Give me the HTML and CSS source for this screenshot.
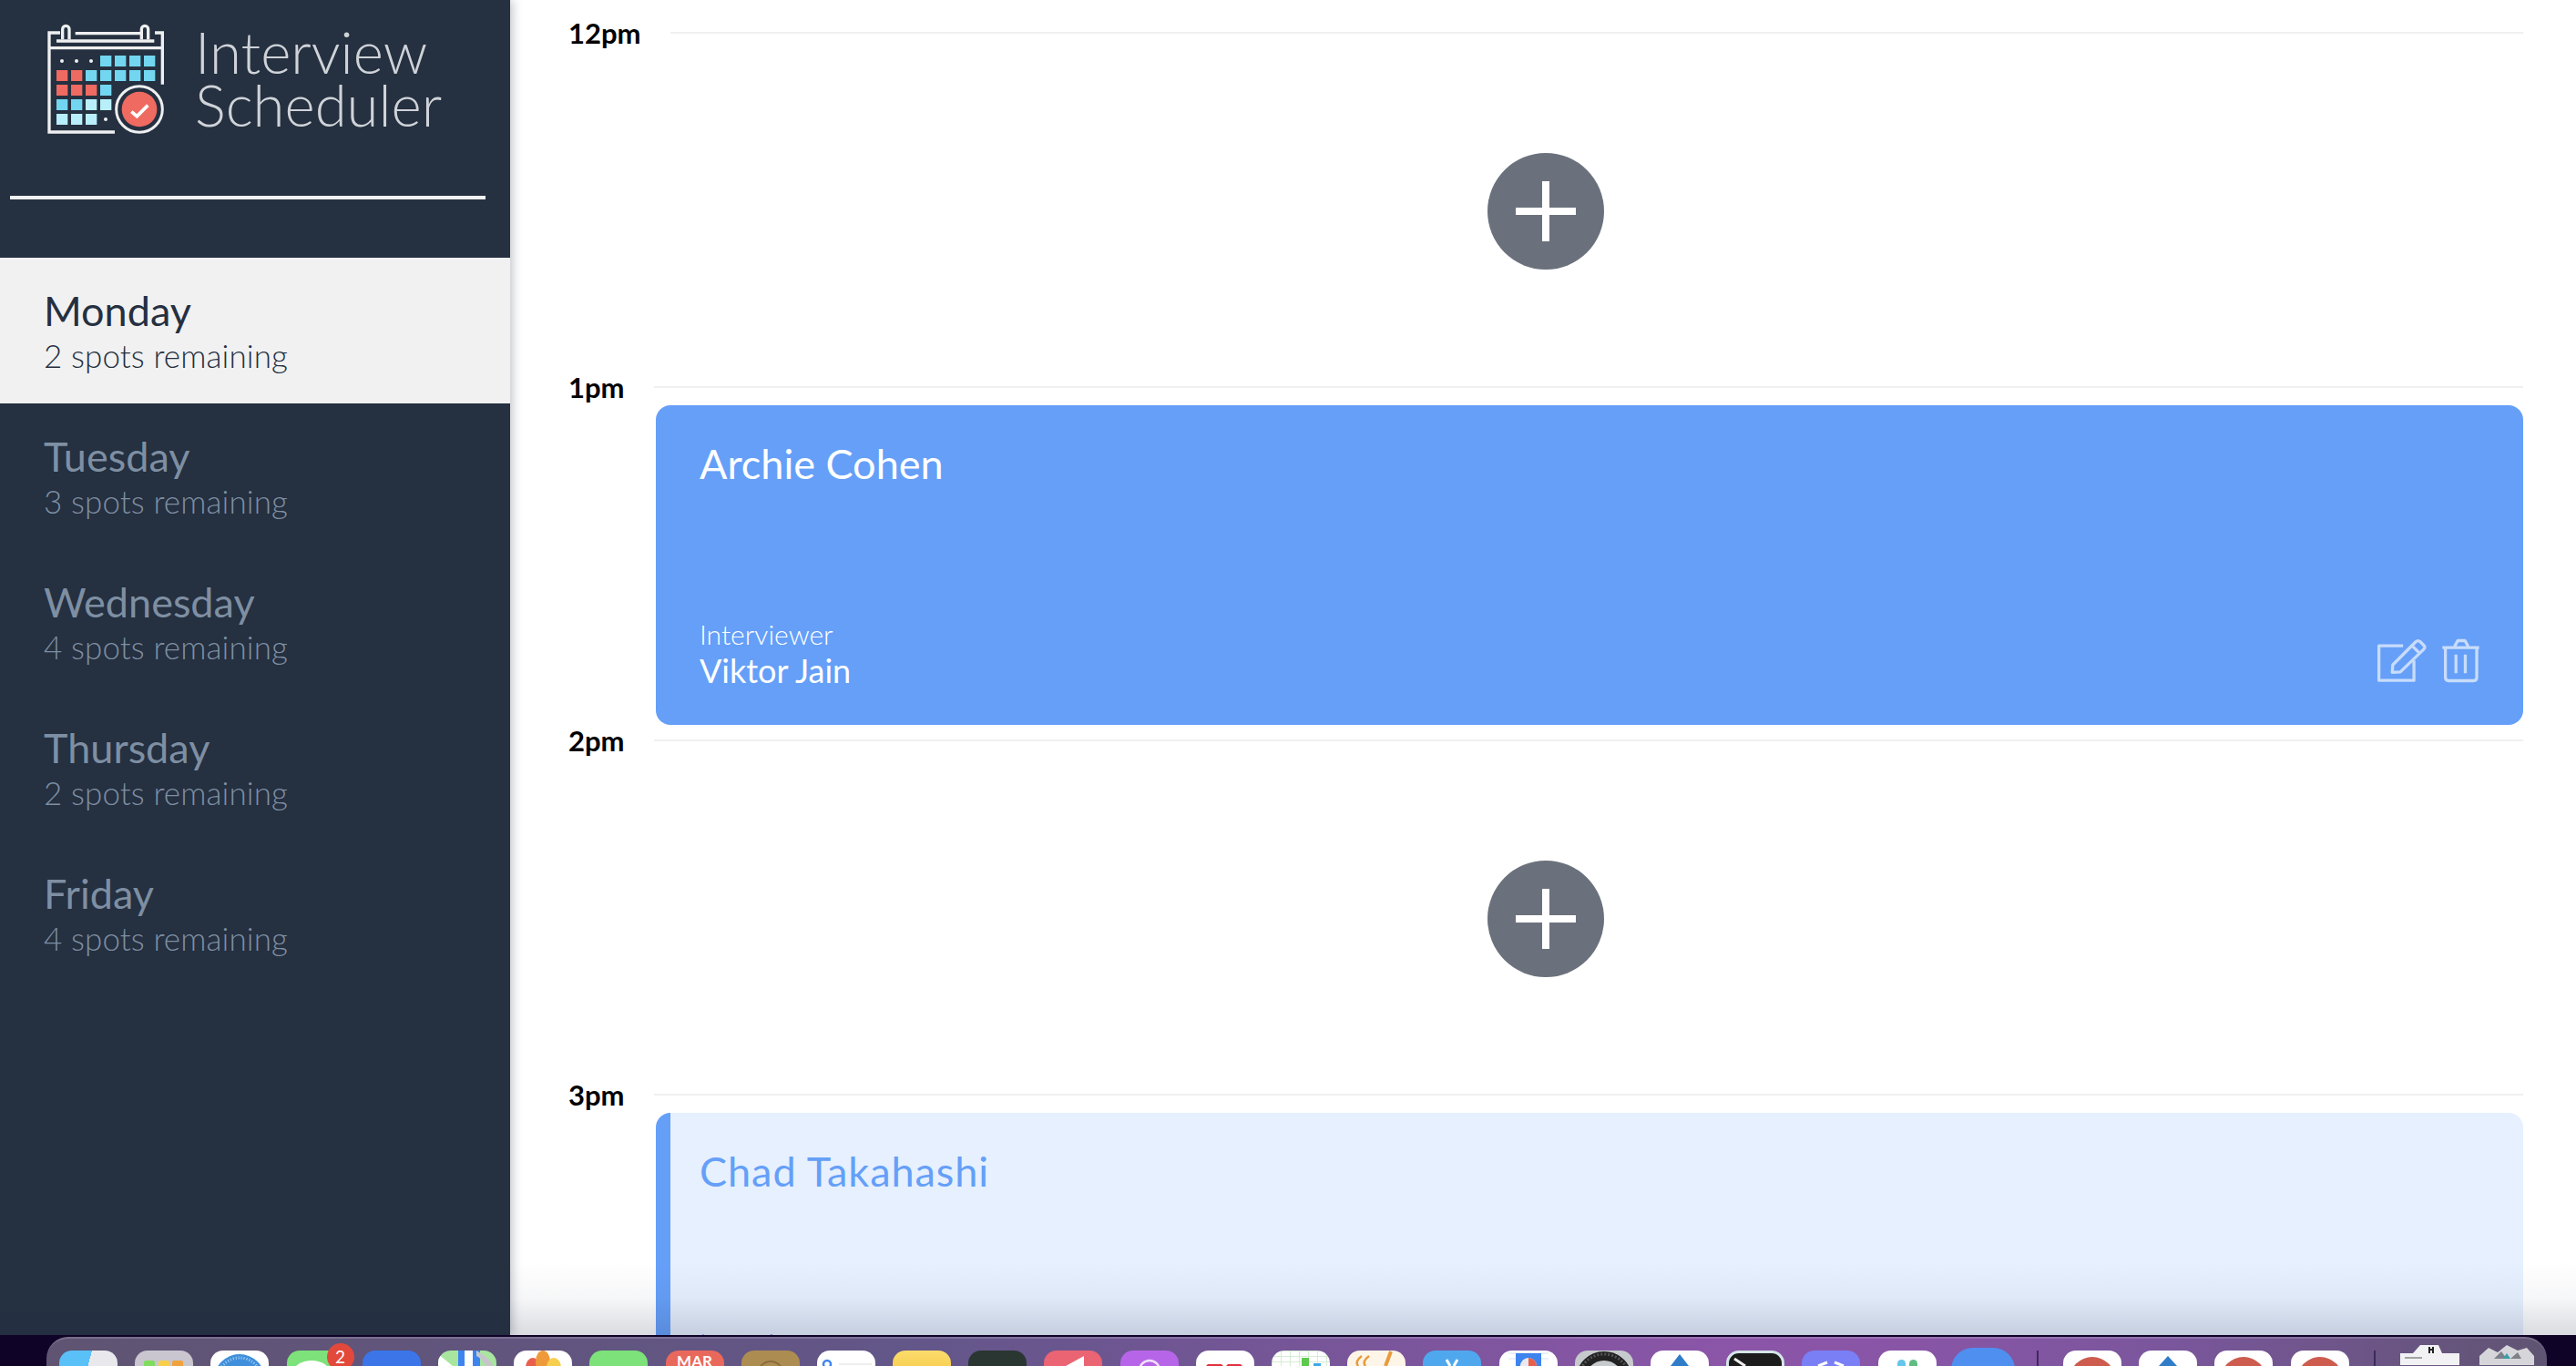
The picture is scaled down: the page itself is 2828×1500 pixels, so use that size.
FILE: index.html
```html
<!DOCTYPE html>
<html lang="en">
<head>
    <meta charset="UTF-8" />
    <title>Interview Scheduler</title>
    <link rel="stylesheet" href="styles.css">
</head>
<body>
    <div class="app">
        <nav class="sidebar">
            <div class="brand">
                <svg class="brand-logo" viewBox="60 45 396 372">
                    <g fill="none" stroke="#eeeff0" stroke-width="10">
                        <path d="M108 78H72V405H288" />
                        <path d="M72 128H445" />
                        <path d="M420 78H445V248" />
                        <path d="M158 80H372" />
                        <path d="M96 105H418" />
                        <path d="M116 100V66a11 11 0 0 1 22 0V100" />
                        <path d="M376 100V66a11 11 0 0 1 22 0V100" />
                    </g>
                    <g fill="#eeeff0">
                        <circle cx="114" cy="171" r="6" />
                        <circle cx="162" cy="171" r="6" />
                        <circle cx="210" cy="171" r="6" />
                        <circle cx="258" cy="363" r="6" />
                    </g>
                    <g fill="#72d6f0">
                        <rect x="240" y="153" width="37" height="36" />
                        <rect x="288" y="153" width="37" height="36" />
                        <rect x="336" y="153" width="37" height="36" />
                        <rect x="384" y="153" width="37" height="36" />
                        <rect x="192" y="201" width="37" height="36" />
                        <rect x="240" y="201" width="37" height="36" />
                        <rect x="288" y="201" width="37" height="36" />
                        <rect x="336" y="201" width="37" height="36" />
                        <rect x="384" y="201" width="37" height="36" />
                        <rect x="240" y="249" width="37" height="36" />
                        <rect x="96" y="297" width="37" height="36" />
                        <rect x="144" y="297" width="37" height="36" />
                    </g>
                    <g fill="#ef6a60">
                        <rect x="96" y="201" width="37" height="36" />
                        <rect x="144" y="201" width="37" height="36" />
                        <rect x="96" y="249" width="37" height="36" />
                        <rect x="144" y="249" width="37" height="36" />
                        <rect x="192" y="249" width="37" height="36" />
                    </g>
                    <g fill="#b8effb">
                        <rect x="192" y="297" width="37" height="36" />
                        <rect x="240" y="297" width="37" height="36" />
                        <rect x="96" y="345" width="37" height="36" />
                        <rect x="144" y="345" width="37" height="36" />
                        <rect x="192" y="345" width="37" height="36" />
                    </g>
                    <circle cx="369" cy="330" r="76" fill="#253040" stroke="#eeeff0" stroke-width="9" />
                    <circle cx="369" cy="330" r="58" fill="#ef6a60" />
                    <path d="M343 338L361 353L397 317" fill="none" stroke="#fff" stroke-width="11" />
                </svg>
                <div class="brand-name">Interview<br>Scheduler</div>
            </div>
            <div class="sidebar-rule"></div>
            <ul class="day-list">
                <li class="day day-selected">
                    <div class="day-name">Monday</div>
                    <div class="day-spots">2 spots remaining</div>
                </li>
                <li class="day">
                    <div class="day-name">Tuesday</div>
                    <div class="day-spots">3 spots remaining</div>
                </li>
                <li class="day">
                    <div class="day-name">Wednesday</div>
                    <div class="day-spots">4 spots remaining</div>
                </li>
                <li class="day">
                    <div class="day-name">Thursday</div>
                    <div class="day-spots">2 spots remaining</div>
                </li>
                <li class="day">
                    <div class="day-name">Friday</div>
                    <div class="day-spots">4 spots remaining</div>
                </li>
            </ul>
        </nav>

        <main class="schedule">
            <section class="slot">
                <header class="slot-head">
                    <span class="slot-time">12pm</span>
                    <span class="slot-line"></span>
                </header>
                <div class="slot-body slot-empty">
                    <button class="add-btn" aria-label="Add appointment">
                        <svg viewBox="0 0 66 66" width="66" height="66"><path d="M33 0V66M0 33H66" stroke="#fff" stroke-width="8" /></svg>
                    </button>
                </div>
            </section>
            <section class="slot">
                <header class="slot-head">
                    <span class="slot-time">1pm</span>
                    <span class="slot-line"></span>
                </header>
                <div class="slot-body card">
                    <div class="card-name">Archie Cohen</div>
                    <div class="card-foot">
                        <div>
                            <div class="card-label">Interviewer</div>
                            <div class="card-person">Viktor Jain</div>
                        </div>
                        <div class="card-actions">
                            <svg class="icon-edit" viewBox="205 122 172 153">
                                <path d="M296 149H216V264H332V198" />
                                <path d="M260 237L262 212L338 136Q346 129 353 136L365 148Q371 154 364 161L287 236Z" />
                                <path d="M326 149L351 174" />
                            </svg>
                            <svg class="icon-trash" viewBox="415 122 136 153">
                                <path d="M422 155H544" />
                                <path d="M462 152L473 132H497L508 152" />
                                <path d="M432 155V254Q432 265 443 265H526Q536 265 536 254V155" />
                                <path d="M467 178V240M498 178V240" />
                            </svg>
                        </div>
                    </div>
                </div>
            </section>
            <section class="slot">
                <header class="slot-head">
                    <span class="slot-time">2pm</span>
                    <span class="slot-line"></span>
                </header>
                <div class="slot-body slot-empty">
                    <button class="add-btn" aria-label="Add appointment">
                        <svg viewBox="0 0 66 66" width="66" height="66"><path d="M33 0V66M0 33H66" stroke="#fff" stroke-width="8" /></svg>
                    </button>
                </div>
            </section>
            <section class="slot">
                <header class="slot-head">
                    <span class="slot-time">3pm</span>
                    <span class="slot-line"></span>
                </header>
                <div class="slot-body card card-light">
                    <div class="card-name">Chad Takahashi</div>
                    <div class="card-foot">
                        <div>
                            <div class="card-label">Interviewer</div>
                            <div class="card-person"></div>
                        </div>
                    </div>
                </div>
            </section>
        </main>
        <div class="dock-shade"></div>
    </div>

    <footer class="dock">
        <div class="tile tile-finder"></div>
        <div class="tile tile-launchpad"><svg viewBox="0 0 64 17"><rect x="10" y="11" width="12" height="8" rx="2" fill="#7fdc5e" /><rect x="26" y="11" width="12" height="8" rx="2" fill="#f8cf4a" /><rect x="41" y="11" width="12" height="8" rx="2" fill="#f0a23c" /></svg></div>
        <div class="tile tile-white"><svg viewBox="0 0 64 17"><circle cx="32" cy="32" r="28" fill="#3f8fdc" /><circle cx="32" cy="32" r="24" fill="none" stroke="#a9d2f2" stroke-width="3" stroke-dasharray="1 2" /></svg></div>
        <div class="tile tile-green"><svg viewBox="0 0 64 17"><ellipse cx="27" cy="24" rx="20" ry="13" fill="#fff" /></svg><span class="badge">2</span></div>
        <div class="tile tile-royal"></div>
        <div class="tile tile-maps"><svg viewBox="0 0 64 17"><path d="M0 4L16 17H0Z" fill="#fff" /><rect x="22" y="0" width="7" height="17" fill="#3d84ee" /><rect x="29" y="0" width="9" height="17" fill="#fff" /><rect x="38" y="0" width="8" height="17" fill="#3d84ee" /><path d="M42 0C52 6 58 10 60 17H52C50 12 46 8 42 6Z" fill="#c5c5ca" /></svg></div>
        <div class="tile tile-white"><svg viewBox="0 0 64 17"><ellipse cx="21" cy="19" rx="8" ry="11" fill="#e8604c" /><ellipse cx="32" cy="12" rx="8" ry="12" fill="#ef9a3a" /><ellipse cx="44" cy="19" rx="8" ry="11" fill="#f6cf4e" /></svg></div>
        <div class="tile tile-green"></div>
        <div class="tile tile-calendar">MAR</div>
        <div class="tile tile-brown"><svg viewBox="0 0 64 17"><circle cx="32" cy="26" r="14" fill="none" stroke="#8a6c3d" stroke-width="2" /></svg></div>
        <div class="tile tile-white"><svg viewBox="0 0 64 17"><circle cx="11" cy="15" r="4" fill="none" stroke="#3d84ee" stroke-width="2.5" /><path d="M24 15H60" stroke="#ddd" /></svg></div>
        <div class="tile tile-yellow"></div>
        <div class="tile tile-dark"></div>
        <div class="tile tile-rose"><svg viewBox="0 0 64 17"><path d="M24 17L44 6V17Z" fill="#fff" /></svg></div>
        <div class="tile tile-purple"><svg viewBox="0 0 64 17"><circle cx="32" cy="22" r="11" fill="none" stroke="#f2e3fb" stroke-width="2.5" /><circle cx="32" cy="22" r="5" fill="#f2e3fb" /></svg></div>
        <div class="tile tile-white"><svg viewBox="0 0 64 17"><path d="M11 17L13 15H28L30 17ZM33 17L35 15H49L51 17Z" fill="#e0313f" /></svg></div>
        <div class="tile tile-numbers"><svg viewBox="0 0 64 17"><rect x="33" y="8" width="8" height="9" fill="#5fc94e" /><rect x="46" y="14" width="8" height="3" fill="#3ea9e8" /></svg></div>
        <div class="tile tile-pages"><svg viewBox="0 0 64 17"><path d="M16 6Q8 12 12 17M24 6Q16 12 20 17" fill="none" stroke="#e89a3c" stroke-width="2.5" /><path d="M48 1L42 17" stroke="#e89a3c" stroke-width="4" /></svg></div>
        <div class="tile tile-sky"><svg viewBox="0 0 64 17"><path d="M26 10L30 17M38 10L34 17" stroke="#fff" stroke-width="3" /></svg></div>
        <div class="tile tile-white"><svg viewBox="0 0 64 17"><path d="M10 3H54M10 9H54" stroke="#d5e5f5" /><rect x="18" y="3" width="28" height="14" fill="#3d84ee" /><path d="M23 17A9 9 0 0 1 41 17Z" fill="#e9e9ef" /><path d="M32 8A9 9 0 0 1 41 17H32Z" fill="#e8604c" /></svg></div>
        <div class="tile tile-gear"><svg viewBox="0 0 64 17"><circle cx="32" cy="32" r="26" fill="none" stroke="#222" stroke-width="10" /><circle cx="32" cy="32" r="28" fill="none" stroke="#555" stroke-width="3" stroke-dasharray="2 2" /></svg></div>
        <div class="tile tile-white"><svg viewBox="0 0 64 17"><path d="M22 17L32 4L42 17Z" fill="#2f7cc9" /></svg></div>
        <div class="tile tile-terminal"><svg viewBox="0 0 58 14"><path d="M6 6L18 14" stroke="#eee" stroke-width="3" /></svg></div>
        <div class="tile tile-discord"><svg viewBox="0 0 64 17"><path d="M18 17L28 13M46 17L36 13" stroke="#fff" stroke-width="3" /></svg></div>
        <div class="tile tile-white"><svg viewBox="0 0 64 17"><rect x="21" y="10" width="9" height="14" rx="4.5" fill="#63c6ea" /><rect x="34" y="10" width="9" height="14" rx="4.5" fill="#5fbd83" /></svg></div>
        <div class="tile tile-zoom"></div>
        <div class="dock-sep"></div>
        <div class="tile tile-white"><svg viewBox="0 0 64 17"><circle cx="32" cy="32" r="25" fill="#cd5c4e" /></svg></div>
        <div class="tile tile-white"><svg viewBox="0 0 64 17"><path d="M22 17L32 6L42 17Z" fill="#2f7cc9" /></svg></div>
        <div class="tile tile-white"><svg viewBox="0 0 64 17"><circle cx="32" cy="32" r="25" fill="#cd5c4e" /></svg></div>
        <div class="tile tile-white"><svg viewBox="0 0 64 17"><circle cx="32" cy="32" r="25" fill="#cd5c4e" /></svg></div>
        <div class="dock-sep"></div>
        <div class="tile-doc"><svg viewBox="0 0 65 22" width="65" height="22"><path d="M0 9H14L22 0H42L46 9H65V22H0Z" fill="#f2f2f4" /><path d="M32 2V9M36 2V9M32 5H36" stroke="#222" stroke-width="2" /><path d="M5 14H24" stroke="#555" /></svg></div>
        <div class="tile-bin"><svg viewBox="0 0 60 22" width="60" height="22"><path d="M0 12L10 3L20 8L30 0L42 6L52 3L60 12V22H0Z" fill="#d6d6da" /><path d="M16 15L24 7L30 15M34 15L42 8L46 15" fill="#7c8088" /><path d="M26 15L30 9L34 15" fill="#35a0a8" /></svg></div>
    </footer>
</body>
</html>
```

FILE: styles.css
```css
* {
    box-sizing: border-box;
}
html,
body {
    height: 100%;
}
body {
    margin: 0;
    background: #100328;
    font-family: "Lato", "Liberation Sans", sans-serif;
    overflow: hidden;
}
.app {
    position: relative;
    display: flex;
    height: 1466px;
    overflow: hidden;
    background: #fff;
}

/* sidebar */
.sidebar {
    flex: 0 0 560px;
    background: #253040;
    box-shadow: 3px 0 10px rgba(60, 70, 90, 0.3);
    z-index: 1;
}
.brand {
    display: flex;
    height: 215px;
    padding: 25px 0 0 50px;
}
.brand-logo {
    width: 132px;
    height: 124px;
}
.brand-name {
    margin: 3px 0 0 32px;
    font-size: 63.5px;
    font-weight: 300;
    line-height: 58px;
    color: #cfd3d8;
}
.sidebar-rule {
    height: 4px;
    margin: 0 27px 0 11px;
    background: #f1f1f2;
}
.day-list {
    list-style: none;
    margin: 64px 0 0;
    padding: 0;
}
.day {
    height: 160px;
    padding: 31px 0 0 48px;
    color: #7e8fa3;
}
.day-selected {
    background: #f1f1f2;
    color: #253040;
}
.day-name {
    font-size: 45px;
    line-height: 54px;
}
.day-spots {
    font-size: 35px;
    font-weight: 300;
    line-height: 44px;
    letter-spacing: 0.1px;
}

/* schedule */
.schedule {
    flex: 1;
    padding: 19px 58px 0 64px;
}
.slot-head {
    display: flex;
    align-items: center;
    height: 34px;
}
.slot-time {
    font-size: 31px;
    font-weight: 700;
    line-height: 34px;
    color: #000;
}
.slot-line {
    flex: 1;
    height: 2px;
    margin-left: 32px;
    background: #f0f0f1;
}
.slot-body {
    height: 351.7px;
    margin-top: 3px;
}
.slot-empty {
    display: flex;
    align-items: center;
    justify-content: center;
}
.add-btn {
    display: flex;
    align-items: center;
    justify-content: center;
    width: 128px;
    height: 128px;
    padding: 0;
    border: none;
    border-radius: 50%;
    background: #6b717c;
}
.card {
    display: flex;
    flex-direction: column;
    justify-content: space-between;
    margin-left: 96px;
    padding: 37px 48px 39px;
    border-radius: 16px;
    background: #659ff8;
    color: #fff;
}
.card-light {
    padding-left: 32px;
    border-left: 16px solid #659ff8;
    background: #e6f0fe;
    color: #659ff8;
}
.card-name {
    font-size: 45px;
    line-height: 54px;
}
.card-light .card-name {
    letter-spacing: 0.95px;
}
.card-foot {
    display: flex;
    align-items: flex-end;
    justify-content: space-between;
}
.card-label {
    font-size: 30px;
    font-weight: 300;
    line-height: 37px;
}
.card-person {
    min-height: 42px;
    font-size: 36px;
    line-height: 42px;
}
.card-actions {
    display: flex;
    gap: 14px;
    margin: 0 -2px 6px 0;
}
.card-actions svg {
    height: 51px;
    fill: none;
    stroke: #c8dcfb;
    stroke-width: 10;
    stroke-linejoin: round;
}
.icon-edit {
    width: 57px;
}
.icon-trash {
    width: 45px;
}
.dock-shade {
    position: absolute;
    left: 0;
    right: 0;
    bottom: 0;
    z-index: 2;
    height: 80px;
    background: linear-gradient(rgba(30, 40, 70, 0), rgba(30, 40, 70, 0.04) 50%, rgba(30, 40, 70, 0.17));
}

/* dock */
.dock {
    display: flex;
    gap: 19.2px;
    height: 32px;
    margin: 2px 32px 0 51px;
    padding: 13px 0 0 14px;
    overflow: hidden;
    border-top: 2px solid rgba(255, 255, 255, 0.16);
    border-radius: 24px 24px 0 0;
    background: linear-gradient(90deg, #5f5472, #635689 35%, #8b55a8 67%, #8855a6 75%, #7a569c 85%, #5f5472);
}
.tile {
    position: relative;
    flex: 0 0 64px;
    height: 30px;
    border-radius: 14px 14px 0 0;
    overflow: hidden;
}
.tile svg {
    display: block;
    width: 64px;
    height: 17px;
}
.tile-white { background: #fff; }
.tile-finder { background: linear-gradient(105deg, #5ac0f8 50%, #e9e9ed 50%); }
.tile-launchpad { background: #c9c6cf; }
.tile-green { background: #7de27a; overflow: visible; }
.tile-royal { background: #3b75e8; }
.tile-maps { background: #a8e6a0; }
.tile-calendar {
    background: #e9685c;
    color: #fff;
    font-size: 17px;
    font-weight: 700;
    line-height: 24px;
    text-align: center;
}
.tile-brown { background: #ad8c52; }
.tile-yellow { background: linear-gradient(#fbdc6c, #f6c844); }
.tile-dark { background: #2a3632; }
.tile-rose { background: #ea6473; }
.tile-purple { background: #b765e8; }
.tile-numbers {
    background: #fff;
    background-image: linear-gradient(#d5ecd5 1px, transparent 1px), linear-gradient(90deg, #d5ecd5 1px, transparent 1px);
    background-size: 10px 6px;
}
.tile-pages { background: #fdf6e8; }
.tile-sky { background: #4fa8ee; }
.tile-gear { background: #c6cacd; }
.tile-terminal {
    border: 3px solid #d5e5e8;
    background: #1c1c1c;
}
.tile-terminal svg {
    width: 58px;
    height: 14px;
}
.tile-discord { background: #7a7ff5; }
.tile-zoom {
    flex-basis: 70px;
    margin: -3px -3px 0;
    height: 34px;
    border-radius: 24px 24px 0 0;
    background: #4f8ff0;
}
.badge {
    position: absolute;
    top: -8px;
    left: 44px;
    width: 30px;
    height: 30px;
    border-radius: 50%;
    background: #e2493b;
    color: #fff;
    font-size: 19px;
    line-height: 30px;
    text-align: center;
}
.dock-sep {
    flex: 0 0 2px;
    height: 30px;
    margin: 0 8px;
    background: #3c2a5c;
}
.tile-doc,
.tile-bin {
    margin-top: -6px;
    height: 22px;
}
.tile-bin {
    margin-left: 3px;
}
```
